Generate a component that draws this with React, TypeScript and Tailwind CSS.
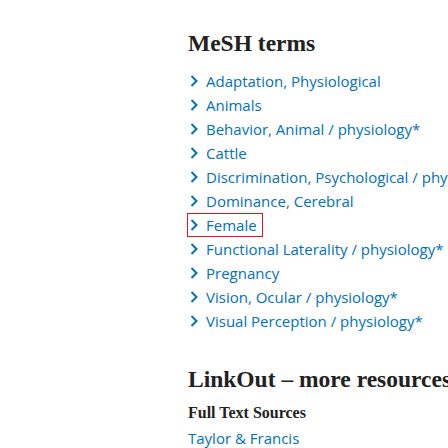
const terms = [
  'Adaptation, Physiological',
  'Animals',
  'Behavior, Animal / physiology*',
  'Cattle',
  'Discrimination, Psychological / physiology*',
  'Dominance, Cerebral',
  'Female',
  'Functional Laterality / physiology*',
  'Pregnancy',
  'Vision, Ocular / physiology*',
  'Visual Perception / physiology*',
];

function Chevron() {
  return (
    <svg width="8" height="12" viewBox="0 0 8 12" className="shrink-0">
      <polyline points="1.5,1 6.5,6 1.5,11" fill="none" stroke="#0071bc" strokeWidth="2" />
    </svg>
  );
}

export default function App() {
  return (
    <div className="w-[448px] h-[448px] overflow-hidden bg-white">
      <div className="pl-[188px] pt-[29px] whitespace-nowrap">
        <h2 className="text-[23.5px] leading-[28px] font-bold text-[#212121] font-['Liberation_Serif',serif]">
          MeSH terms
        </h2>

        <ul className="mt-[12px] font-['Open_Sans',sans-serif] text-[15px] leading-[24px] text-[#0071bc]">
          {terms.map((t) => (
            <li key={t} className="h-[24px] flex items-center">
              <a
                href="#"
                className={
                  'inline-flex items-center gap-[8px] h-[22px] pl-[2px] pr-[5px] ' +
                  (t === 'Female' ? 'outline outline-1 outline-[#e5141b]' : '')
                }
              >
                <Chevron />
                <span>{t}</span>
              </a>
            </li>
          ))}
        </ul>

        <h2 className="mt-[32px] text-[23.5px] leading-[28px] font-bold text-[#212121] font-['Liberation_Serif',serif]">
          LinkOut – more resources
        </h2>

        <h3 className="mt-[10px] text-[16px] leading-[20px] font-bold text-[#212121] font-['Liberation_Serif',serif]">
          Full Text Sources
        </h3>
        <a href="#" className="block mt-[3px] font-['Open_Sans',sans-serif] text-[15px] leading-[24px] text-[#0071bc]">
          Taylor &amp; Francis
        </a>
      </div>
    </div>
  );
}
